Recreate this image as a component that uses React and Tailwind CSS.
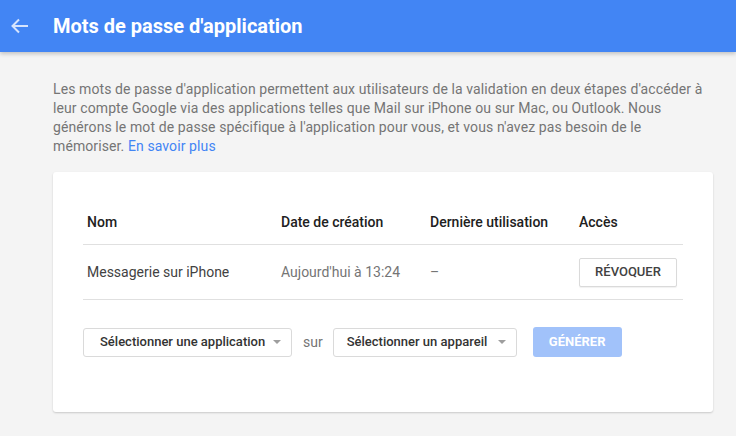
import React from 'react';

const Caret = () => (
  <svg width="8" height="4" viewBox="0 0 8 4" className="ml-auto">
    <path d="M0 0 L8 0 L4 4 Z" fill="#9e9e9e" />
  </svg>
);

export default function App() {
  return (
    <div className="min-h-[436px] w-[736px] bg-[#f4f4f4] font-['Roboto',sans-serif]">
      {/* Header */}
      <div className="h-[52px] bg-[#4285f4] flex items-center shadow-[0_2px_4px_rgba(0,0,0,0.2)]">
        <svg width="18" height="16" viewBox="0 0 18 16" className="ml-[11px]">
          <path d="M17 8 H2 M8 1.5 L1.5 8 L8 14.5" stroke="#d6e4fd" strokeWidth="2" fill="none" />
        </svg>
        <h1 className="ml-[24px] text-[20px] font-bold text-white">Mots de passe d'application</h1>
      </div>

      {/* Description */}
      <p className="mx-[53px] mt-[28px] text-[14px] leading-[19px] text-[#757575] w-[670px] tracking-[0.1px]">
        Les mots de passe d'application permettent aux utilisateurs de la validation en deux étapes d'accéder à
        <br />
        leur compte Google via des applications telles que Mail sur iPhone ou sur Mac, ou Outlook. Nous
        <br />
        générons le mot de passe spécifique à l'application pour vous, et vous n'avez pas besoin de le
        <br />
        mémoriser. <a className="text-[#4285f4]">En savoir plus</a>
      </p>

      {/* Card */}
      <div className="ml-[53px] mt-[16px] w-[660px] h-[240px] bg-white rounded-[3px] shadow-[0_1px_2px_rgba(0,0,0,0.18)] px-[30px] pt-[28px]">
        <div className="flex h-[45px] items-center border-b border-[#e0e0e0] text-[14px] font-medium text-[#212121]">
          <div className="w-[194px] pl-[4px]">Nom</div>
          <div className="w-[149px] pl-[4px]">Date de création</div>
          <div className="w-[149px] pl-[4px]">Dernière utilisation</div>
          <div className="pl-[4px]">Accès</div>
        </div>
        <div className="flex h-[55px] items-center border-b border-[#e0e0e0] text-[14px]">
          <div className="w-[194px] pl-[4px] text-[#424242]">Messagerie sur iPhone</div>
          <div className="w-[149px] pl-[4px] text-[#757575]">Aujourd'hui à 13:24</div>
          <div className="w-[149px] pl-[4px] text-[#757575]">–</div>
          <div className="pl-[4px]">
            <button className="w-[98px] h-[29px] border border-[#dadada] rounded-[2px] text-[13px] font-medium text-[#424242] bg-white shadow-[0_1px_1px_rgba(0,0,0,0.06)]">
              RÉVOQUER
            </button>
          </div>
        </div>

        <div className="flex items-center mt-[27px]">
          <div className="w-[209px] h-[29px] border border-[#dadada] rounded-[3px] flex items-center pl-[16px] pr-[10px] text-[13px] font-medium text-[#333]">
            Sélectionner une application
            <Caret />
          </div>
          <span className="ml-[11px] text-[14px] text-[#757575]">sur</span>
          <div className="ml-[10px] w-[184px] h-[29px] border border-[#dadada] rounded-[3px] flex items-center pl-[13px] pr-[10px] text-[13px] font-medium text-[#333]">
            Sélectionner un appareil
            <Caret />
          </div>
          <button className="ml-[16px] w-[89px] h-[30px] rounded-[3px] bg-[#a1c2fa] text-white text-[13px] font-bold">
            GÉNÉRER
          </button>
        </div>
      </div>
    </div>
  );
}
